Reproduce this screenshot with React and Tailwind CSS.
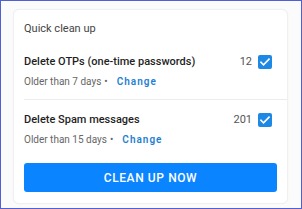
export default function App() {
  const rows = [
    { title: "Delete OTPs (one-time passwords)", count: 12, age: "Older than 7 days" },
    { title: "Delete Spam messages", count: 201, age: "Older than 15 days" },
  ];

  return (
    <div
      className="w-[302px] h-[209px] border border-[#4f5fd6] bg-[#fbfbfb] pt-[8px] pl-[12px] pr-[13px]"
      style={{ fontFamily: "Roboto, 'Liberation Sans', sans-serif" }}
    >
      <div className="h-[195px] bg-white rounded-[6px] border border-[#f0f0f0] pl-[10px] shadow-[0_0_2px_rgba(0,0,0,0.04)]">
        <div className="pt-[12px] text-[11px] leading-[14px] text-[#444]">Quick clean up</div>

        {rows.map((r, i) => (
          <div key={r.title} className={i === 0 ? "pt-[19px] pb-[11px] border-b border-[#ececec]" : "pt-[13px]"}>
            <div className="flex items-center pr-[15px]">
              <div className="flex-1 text-[11px] leading-[14px] font-medium text-[#1f1f1f]">{r.title}</div>
              <div className="text-[11px] leading-[14px] text-[#555] mr-[6px]">{r.count}</div>
              <div className="w-[14px] h-[14px] rounded-[2px] bg-[#1e88e5] flex items-center justify-center">
                <svg width="12" height="12" viewBox="0 0 24 24" fill="none" stroke="white" strokeWidth="3.2" strokeLinecap="square">
                  <path d="M4 12.5l5 5L20 6.5" />
                </svg>
              </div>
            </div>
            <div className="mt-[6px] flex items-center text-[10px] leading-[13px] text-[#666]">
              <span>{r.age}</span>
              <span className="ml-[3px]">•</span>
              <span className="ml-[9px] font-semibold tracking-[1px] text-[#1f7fd1]">Change</span>
            </div>
          </div>
        ))}

        <div className="pr-[10px] mt-[17px]">
          <button className="w-full h-[29px] rounded-[3px] bg-[#0a84ff] text-white text-[12px] font-medium tracking-[0.6px]">
            CLEAN UP NOW
          </button>
        </div>
      </div>
    </div>
  );
}
